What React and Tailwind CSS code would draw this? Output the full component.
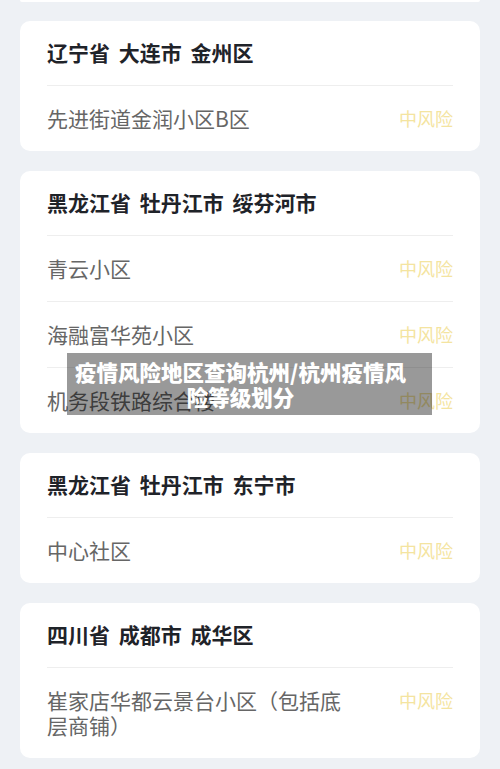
import React from "react";

const cards = [
  {
    title: "辽宁省 大连市 金州区",
    rows: ["先进街道金润小区B区"],
  },
  {
    title: "黑龙江省 牡丹江市 绥芬河市",
    rows: ["青云小区", "海融富华苑小区", "机务段铁路综合楼"],
  },
  {
    title: "黑龙江省 牡丹江市 东宁市",
    rows: ["中心社区"],
  },
  {
    title: "四川省 成都市 成华区",
    rows: ["崔家店华都云景台小区（包括底层商铺）"],
  },
];

function Card({ title, rows }) {
  return (
    <div className="bg-white rounded-[10px] px-[27px]">
      <div className="h-[64px] flex items-center text-[21px] font-bold text-[#1f2329] [word-spacing:4px]">
        {title}
      </div>
      {rows.map((r, i) => (
        <div key={i} className="border-t border-[#eeeeee] flex items-start justify-between py-[20px]">
          <div className="text-[21px] leading-[25px] text-[#666666] max-w-[300px]">{r}</div>
          <div className="text-[18px] leading-[25px] text-[#f4e4a0] shrink-0">中风险</div>
        </div>
      ))}
    </div>
  );
}

export default function App() {
  return (
    <div
      className="relative w-[500px] h-[769px] overflow-hidden bg-[#eef1f5]"
      style={{ fontFamily: '"Noto Sans CJK SC", "Noto Sans", sans-serif' }}
    >
      <div className="flex flex-col gap-5 px-5">
        <div className="h-[2px] bg-white rounded-b-[2px] -mb-[1px]" />
        {cards.map((c, i) => (
          <Card key={i} {...c} />
        ))}
      </div>
      <div className="absolute left-[67px] top-[353px] w-[365px] h-[62px] bg-black/40 pl-[2px] pr-[20px] py-[6px] text-center text-white font-black text-[21.5px] leading-[25px]">
        疫情风险地区查询杭州/杭州疫情风险等级划分
      </div>
    </div>
  );
}
